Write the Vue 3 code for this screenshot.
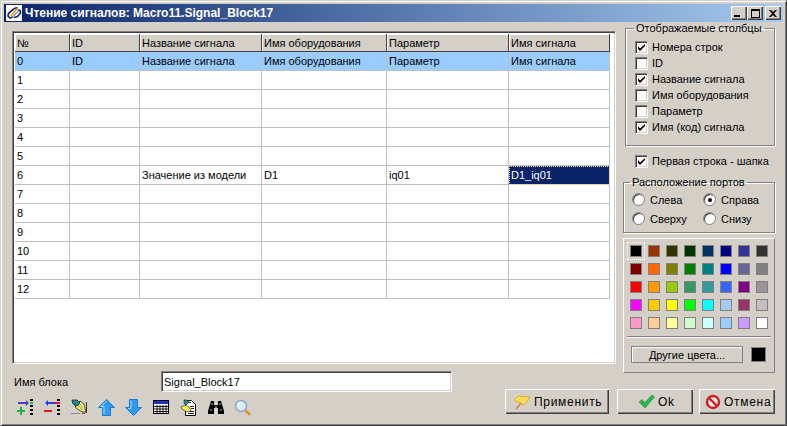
<script setup>
const columns = ['№', 'ID', 'Название сигнала', 'Имя оборудования', 'Параметр', 'Имя сигнала']
const rows = [
  ['0', 'ID', 'Название сигнала', 'Имя оборудования', 'Параметр', 'Имя сигнала'],
  ['1', '', '', '', '', ''],
  ['2', '', '', '', '', ''],
  ['3', '', '', '', '', ''],
  ['4', '', '', '', '', ''],
  ['5', '', '', '', '', ''],
  ['6', '', 'Значение из модели', 'D1', 'iq01', 'D1_iq01'],
  ['7', '', '', '', '', ''],
  ['8', '', '', '', '', ''],
  ['9', '', '', '', '', ''],
  ['10', '', '', '', '', ''],
  ['11', '', '', '', '', ''],
  ['12', '', '', '', '', '']
]
const shownColumns = [
  { label: 'Номера строк', on: true },
  { label: 'ID', on: false },
  { label: 'Название сигнала', on: true },
  { label: 'Имя оборудования', on: false },
  { label: 'Параметр', on: false },
  { label: 'Имя (код) сигнала', on: true }
]
const ports = [
  { label: 'Слева', on: false },
  { label: 'Справа', on: true },
  { label: 'Сверху', on: false },
  { label: 'Снизу', on: false }
]
const colors = [
  '#000000', '#993300', '#333300', '#003300', '#003366', '#000080', '#333399', '#333333',
  '#800000', '#ff6600', '#808000', '#008000', '#008080', '#0000ff', '#666699', '#808080',
  '#ff0000', '#ff9900', '#99cc00', '#339966', '#33999a', '#3366ff', '#800080', '#969696',
  '#ff00ff', '#ffcc00', '#ffff00', '#00ff00', '#00ffff', '#a6caf0', '#993366', '#c0c0c0',
  '#ff99cc', '#ffcc99', '#ffff99', '#ccffcc', '#ccffff', '#99ccff', '#cc99ff', '#ffffff'
]
</script>

<template>
  <div class="window">
    <header class="titlebar">
      <svg class="app-icon" width="16" height="16" viewBox="0 0 16 16">
        <rect width="16" height="16" fill="#fff" />
        <path d="M7 12 4 13 2 11 2.500 8.500 7 4.500 9.500 3 12 3" fill="none" stroke="#1b2a6b" stroke-width="1.700" />
        <path d="M8 12.500 11.500 11.500 14.500 8 14 5.500 12 5" fill="none" stroke="#1b2a6b" stroke-width="1.700" />
        <path d="M4.500 11 11.500 3.500" stroke="#e89a20" stroke-width="1.600" />
        <path d="M6.500 12 12 6.500" stroke="#8a8a9a" stroke-width="1.200" />
      </svg>
      <span class="title">Чтение сигналов: Macro11.Signal_Block17</span>
      <div class="caption-btns">
        <button class="cap"><i class="min"></i></button>
        <button class="cap"><i class="max"></i></button>
        <button class="cap close">
          <svg width="8" height="7" viewBox="0 0 8 7"><path d="M0 0h2l2 2 2-2h2L5 3.500 8 7H6L4 5 2 7H0l3-3.500z" fill="#000" /></svg>
        </button>
      </div>
    </header>

    <div class="body">
      <div class="top">
        <div class="grid-box">
          <table class="grid">
            <colgroup>
              <col style="width: 55px" />
              <col style="width: 70px" />
              <col style="width: 122px" />
              <col style="width: 125px" />
              <col style="width: 122px" />
              <col style="width: 101px" />
            </colgroup>
            <thead>
              <tr>
                <th v-for="c in columns" :key="c"><span>{{ c }}</span></th>
              </tr>
            </thead>
            <tbody>
              <tr v-for="(row, i) in rows" :key="i" :class="{ first: i === 0 }">
                <td v-for="(cell, j) in row" :key="j" :class="{ selected: i === 6 && j === 5 }">{{ cell }}</td>
              </tr>
            </tbody>
          </table>
        </div>

        <aside class="side">
          <fieldset class="group columns">
            <legend>Отображаемые столбцы</legend>
            <label v-for="c in shownColumns" :key="c.label" class="check">
              <span class="box"><svg v-if="c.on" width="9" height="9" viewBox="0 0 9 9"><path d="M1 3v3l2 2 5-5V1L3 5.500z" fill="#000" /></svg></span>
              {{ c.label }}
            </label>
          </fieldset>

          <label class="check header-check">
            <span class="box"><svg width="9" height="9" viewBox="0 0 9 9"><path d="M1 3v3l2 2 5-5V1L3 5.500z" fill="#000" /></svg></span>
            Первая строка - шапка
          </label>

          <fieldset class="group ports">
            <legend>Расположение портов</legend>
            <div class="port-grid">
              <label v-for="p in ports" :key="p.label" class="radio">
                <span class="dot"><i v-if="p.on"></i></span>
                {{ p.label }}
              </label>
            </div>
          </fieldset>

          <div class="palette">
            <div class="swatches">
              <span v-for="(c, i) in colors" :key="i" class="swatch-wrap" :class="{ current: i === 0 }">
                <span class="swatch" :style="{ background: c }"></span>
              </span>
            </div>
            <div class="rule"></div>
            <div class="more">
              <button class="more-btn">Другие цвета...</button>
              <span class="picked"></span>
            </div>
          </div>
        </aside>
      </div>

      <div class="bottom">
        <div class="bottom-left">
          <div class="name-row">
            <label>Имя блока</label>
            <input class="name-input" value="Signal_Block17" />
          </div>
          <div class="tools">
            <!-- add column -->
            <svg width="17" height="17" viewBox="0 0 17 17">
              <path d="M1 3h8V1l3 3-3 3V5H1z" fill="#4a3fc0" />
              <path d="M13 3h3v2h-3z" fill="#20c040" />
              <path d="M13 0h3v2h-3zM13 6h3v2h-3zM13 10h3v2h-3zM13 14h3v2h-3z" fill="#000" />
              <path d="M3 8h2v3h3v2H5v3H3v-3H0v-2h3z" fill="#18b83c" />
            </svg>
            <!-- remove column -->
            <svg width="17" height="17" viewBox="0 0 17 17">
              <path d="M11 3H4V1L1 4l3 3V5h7z" fill="#1f3fe0" />
              <path d="M11 3h5v2h-5z" fill="#e81818" />
              <path d="M13 0h3v2h-3zM13 6h3v2h-3zM13 10h3v2h-3zM13 14h3v2h-3z" fill="#000" />
              <path d="M0 11h8v2H0z" fill="#e81818" />
            </svg>
            <!-- edit -->
            <svg width="17" height="17" viewBox="0 0 17 17">
              <path d="M4 6 9 2 13 5 15 13H11L5 9z" fill="#f6f06a" stroke="#222" stroke-width=".8" />
              <path d="M7 6l4 5M9 5l3 5" stroke="#888" stroke-width=".8" />
              <path d="M1 1h5l3 3-3 3-4-2z" fill="#1f8a90" stroke="#0a2a30" stroke-width=".8" />
              <path d="M15.500 3v11" stroke="#333" />
              <path d="M0 14.500h9" stroke="#888" />
              <path d="M11 14.500h3" stroke="#e02020" />
            </svg>
            <!-- up -->
            <svg width="17" height="17" viewBox="0 0 17 17">
              <path d="M8.500 .5 16.500 8.500H12.500V16.500H4.500V8.500H.5z" fill="#2f9cf0" stroke="#1e78d8" />
              <path d="M8.500 2 3 7.500H6V15" fill="none" stroke="#a6dcff" />
            </svg>
            <!-- down -->
            <svg width="17" height="17" viewBox="0 0 17 17">
              <path d="M4.500 .5H12.500V8.500H16.500L8.500 16.500 .5 8.500H4.500z" fill="#2f9cf0" stroke="#1e78d8" />
              <path d="M6 1.500V9.500H3" fill="none" stroke="#a6dcff" />
            </svg>
            <!-- table -->
            <svg class="shift2" width="16" height="15" viewBox="0 0 16 15">
              <rect x=".5" y=".5" width="15" height="13" fill="#fff" stroke="#000" />
              <rect x="1" y="1" width="14" height="3" fill="#2030d0" />
              <path d="M1 6.500h14M1 9h14M1 11.500h14M4 5v8M7 5v8M10 5v8M13 5v8" stroke="#000" stroke-width=".9" />
            </svg>
            <!-- note -->
            <svg class="shift2" width="17" height="17" viewBox="0 0 17 17">
              <path d="M5.500 1.500h6l4 4v11h-10z" fill="#fff" stroke="#000" />
              <path d="M8 3.500h3M10 7.500h4M11 9.500h3M8 12.500h6M8 14.500h6" stroke="#222" />
              <path d="M1 8 5 6l4 2 2 3-2 2-4-1-3-2z" fill="#f4ee50" stroke="#333" stroke-width=".7" />
              <path d="M4 1h3l2 2-3 3-2-2z" fill="#1f8a90" stroke="#0a2a30" stroke-width=".6" />
            </svg>
            <!-- binoculars -->
            <svg class="shift2" width="16" height="15" viewBox="0 0 16 15">
              <path d="M3 1h3v4h4V1h3l3 10v3h-6V8H6v6H0v-3z" fill="#000" />
              <path d="M7 6h2v2H7z" fill="#666" />
              <path d="M2 10h2M12 10h2M4 3v2M12 3v2" stroke="#bbb" />
            </svg>
            <!-- magnifier -->
            <svg width="18" height="17" viewBox="0 0 18 17">
              <circle cx="7" cy="7" r="5.500" fill="#dcecf8" stroke="#8fa8c8" stroke-width="1.500" />
              <path d="M4 5.500 6 3.500" stroke="#fff" stroke-width="1.500" />
              <path d="M11.500 11.500 16 16" stroke="#d9902e" stroke-width="2.500" />
            </svg>
          </div>
        </div>

        <div class="actions">
          <button class="btn apply">
            <svg width="18" height="17" viewBox="0 0 18 17">
              <path d="M1 7 5 3 17 4 11 12 5 9z" fill="#ffdc50" stroke="#d89a30" stroke-width=".8" />
              <path d="M8 10 3 16" stroke="#c98a4a" stroke-width="1.800" />
            </svg>
            Применить
          </button>
          <button class="btn ok">
            <svg width="16" height="14" viewBox="0 0 16 14">
              <path d="M0 7 3 4.500 6 7.500 13 0 15.500 2 6 13z" fill="#28b848" stroke="#1a9038" stroke-width=".6" />
            </svg>
            Ok
          </button>
          <button class="btn cancel">
            <svg width="16" height="16" viewBox="0 0 16 16">
              <circle cx="8" cy="8" r="6" fill="#f4e8e8" stroke="#c82020" stroke-width="2.400" />
              <path d="M4 4 12 12" stroke="#c82020" stroke-width="2.400" />
            </svg>
            Отмена
          </button>
        </div>
      </div>
    </div>
  </div>
</template>

<style scoped>
.window {
  width: 787px;
  height: 426px;
  box-sizing: border-box;
  background: #d4d0c8;
  border: 1px solid;
  border-color: #d4d0c8 #404040 #404040 #d4d0c8;
  box-shadow: inset 1px 1px 0 #fff, inset -1px -1px 0 #808080;
  padding: 3px 3px 2px 3px;
  display: flex;
  flex-direction: column;
  font-family: "Liberation Sans", Arial, sans-serif;
  font-size: 11px;
  color: #000;
  overflow: hidden;
}
.titlebar {
  height: 18px;
  flex: none;
  display: flex;
  align-items: center;
  background: linear-gradient(90deg, #0a246a, #a6caf0);
  padding: 0 2px;
}
.app-icon { flex: none; }
.title {
  margin-left: 3px;
  color: #fff;
  font-weight: bold;
  font-size: 12px;
  white-space: nowrap;
}
.caption-btns { margin-left: auto; display: flex; }
.cap {
  width: 16px;
  height: 14px;
  padding: 0;
  background: #d4d0c8;
  border: none;
  box-shadow: inset 1px 1px 0 #fff, inset -1px -1px 0 #404040, inset -2px -2px 0 #808080;
  display: flex;
  align-items: center;
  justify-content: center;
}
.cap.close { margin-left: 2px; }
.cap i.min { width: 6px; height: 2px; background: #000; margin: 6px 4px 0 0; }
.cap i.max { width: 9px; height: 9px; box-sizing: border-box; border: 1px solid #000; border-top-width: 2px; }
.body {
  flex: 1;
  display: flex;
  flex-direction: column;
  padding: 9px 8px 0 8px;
  min-height: 0;
}
.top {
  height: 333px;
  flex: none;
  display: flex;
  justify-content: space-between;
  align-items: flex-start;
}
.grid-box {
  width: 604px;
  height: 333px;
  flex: none;
  box-sizing: border-box;
  background: #fff;
  border: 1px solid;
  border-color: #808080 #fff #fff #808080;
  box-shadow: inset 1px 1px 0 #404040, inset -1px -1px 0 #d4d0c8;
  padding: 2px;
  overflow: hidden;
}
.grid {
  border-collapse: separate;
  border-spacing: 0;
  table-layout: fixed;
  width: 595px;
}
.grid th {
  height: 18px;
  padding: 0 0 0 2px;
  background: #d4d0c8;
  font-weight: normal;
  text-align: left;
  box-sizing: border-box;
  border-right: 1px solid #404040;
  border-bottom: 1px solid #404040;
  box-shadow: inset 1px 1px 0 #fff;
  white-space: nowrap;
}
.grid td {
  height: 19px;
  padding: 0 0 0 2px;
  box-sizing: border-box;
  border-right: 1px solid #c0c0c0;
  border-bottom: 1px solid #c0c0c0;
  white-space: nowrap;
  overflow: hidden;
}
.grid tr.first td { background: #99ccff; }
.grid td.selected {
  background: #0a246a;
  color: #fff;
  outline: 1px dotted #ffe8a0;
  outline-offset: -1px;
}
.bottom {
  flex: 1;
  display: flex;
  justify-content: space-between;
  padding-top: 7px;
}
.bottom-left { display: flex; flex-direction: column; }
.name-row { display: flex; align-items: center; height: 21px; }
.name-row label { width: 149px; padding-left: 2px; box-sizing: border-box; }
.name-input {
  width: 291px;
  height: 21px;
  box-sizing: border-box;
  border: 1px solid;
  border-color: #808080 #fff #fff #808080;
  box-shadow: inset 1px 1px 0 #404040, inset -1px -1px 0 #d4d0c8;
  padding: 0 2px;
  font: inherit;
  background: #fff;
}
.tools {
  display: flex;
  align-items: center;
  gap: 10px;
  padding: 7px 0 0 5px;
}
.tools svg { flex: none; }
.tools .shift2 { margin-left: 1px; }
.actions {
  display: flex;
  padding-top: 18px;
}
.btn {
  height: 25px;
  padding: 0;
  display: flex;
  align-items: center;
  gap: 3px;
  font: inherit;
  font-size: 12px;
  letter-spacing: .7px;
  background: #d4d0c8;
  border: none;
  box-shadow: inset 1px 1px 0 #fff, inset -1px -1px 0 #404040, inset -2px -2px 0 #808080;
}
.btn.apply { width: 104px; padding-left: 8px; }
.btn.ok { width: 76px; margin-left: 8px; padding-left: 22px; }
.btn.cancel { width: 76px; margin-left: 6px; padding-left: 6px; }
.side {
  width: 152px;
  flex: none;
  margin-top: -8px;
  display: flex;
  flex-direction: column;
}
.group {
  box-sizing: border-box;
  margin: 0;
  padding: 0;
  min-width: 0;
  border: 1px solid #808080;
  box-shadow: 1px 1px 0 #fff, inset 1px 1px 0 #fff;
}
.group legend {
  padding: 0 2px;
  line-height: 10px;
  white-space: nowrap;
}
.columns {
  height: 123px;
  width: 150px;
  margin-left: 2px;
  padding: 6px 0 0 9px;
}
.columns legend { margin-left: -1px; }
.check {
  display: flex;
  align-items: center;
  gap: 4px;
  height: 16px;
}
.box {
  width: 13px;
  height: 13px;
  box-sizing: border-box;
  background: #fff;
  border: 1px solid;
  border-color: #808080 #fff #fff #808080;
  box-shadow: inset 1px 1px 0 #404040, inset -1px -1px 0 #d4d0c8;
  display: flex;
  align-items: center;
  justify-content: center;
  flex: none;
}
.header-check { margin: 7px 0 0 12px; }
.ports {
  height: 56px;
  margin-top: 8px;
  padding: 3px 0 0 8px;
}
.ports legend { margin-left: -2px; }
.port-grid {
  display: grid;
  grid-template-columns: 71px 70px;
  grid-auto-rows: 19px;
}
.radio { display: flex; align-items: center; gap: 5px; }
.dot {
  width: 13px;
  height: 13px;
  border-radius: 50%;
  background: #fff;
  box-sizing: border-box;
  border: 1px solid #808080;
  box-shadow: inset 1px 1px 0 #404040;
  display: flex;
  align-items: center;
  justify-content: center;
  flex: none;
}
.dot i { width: 4px; height: 4px; border-radius: 50%; background: #000; }
.palette {
  margin-top: 5px;
  height: 135px;
  box-sizing: border-box;
  border: 1px solid;
  border-color: #fff #808080 #808080 #fff;
  padding: 3px 3px 0;
}
.swatches {
  display: grid;
  grid-template-columns: repeat(8, 18px);
  grid-auto-rows: 18px;
}
.swatch-wrap {
  width: 18px;
  height: 18px;
  box-sizing: border-box;
  display: flex;
  align-items: center;
  justify-content: center;
}
.swatch-wrap.current { outline: 1px dotted #fff; outline-offset: -1px; }
.swatch {
  width: 12px;
  height: 12px;
  box-sizing: border-box;
  border: 1px solid #808080;
}
.rule { border-top: 1px solid #808080; border-bottom: 1px solid #fff; margin-top: 4px; }
.more {
  display: flex;
  align-items: center;
  gap: 8px;
  padding: 8px 0 0 4px;
}
.more-btn {
  width: 112px;
  height: 17px;
  padding: 0;
  font: inherit;
  background: #d4d0c8;
  border: 1px solid #808080;
  box-shadow: inset 1px 1px 0 #fff;
}
.picked { width: 15px; height: 15px; box-sizing: border-box; background: #000; border: 1px solid #808080; }
</style>

<style>
html, body { margin: 0; background: #d4d0c8; }
</style>
